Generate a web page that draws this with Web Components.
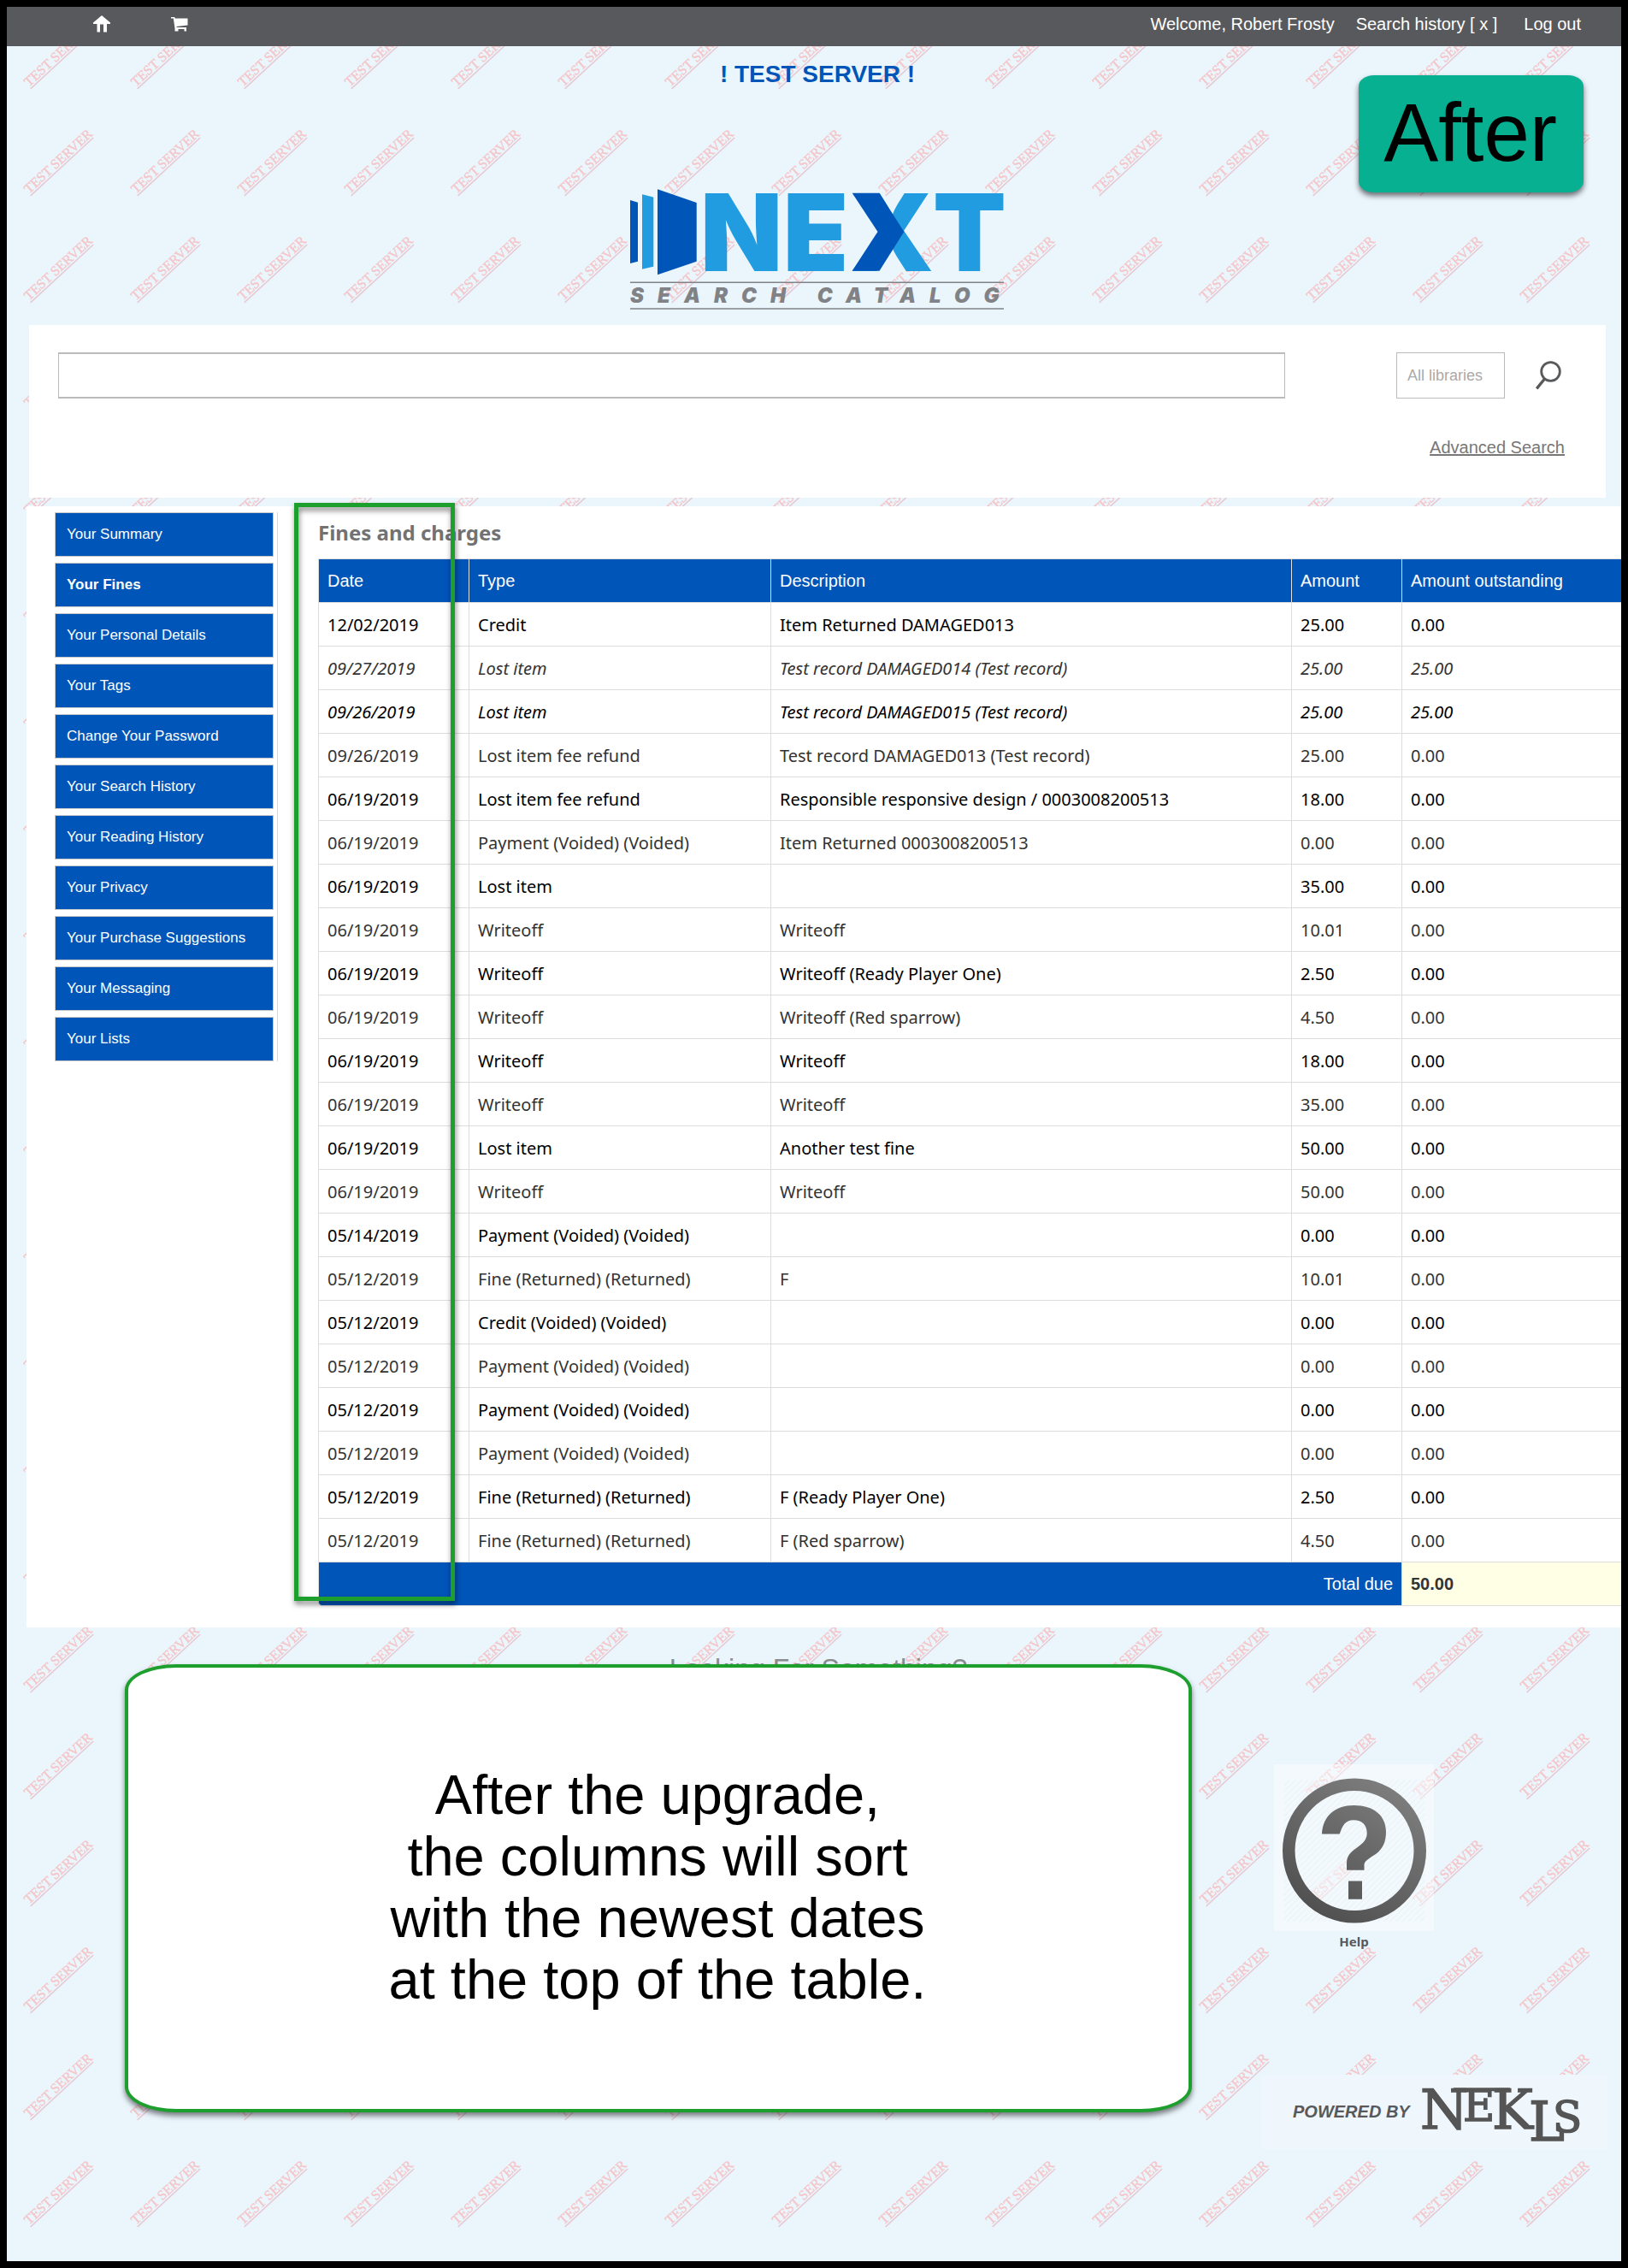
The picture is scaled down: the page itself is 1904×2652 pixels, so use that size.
<!DOCTYPE html>
<html lang="en">
<head>
<meta charset="utf-8">
<title>Next Search Catalog: Your fines</title>
<style>
  html { background: #000; }
  body { margin: 0; padding: 8px; background: #000; font: 20px/24px "Liberation Sans", Arial, sans-serif; }
</style>
</head>
<body>
<catalog-page>
  <top-bar slot="bar"></top-bar>
  <site-hero slot="hero"></site-hero>
  <search-panel slot="search"></search-panel>
  <account-nav slot="nav"></account-nav>
  <fines-table slot="content"></fines-table>
  <site-footer slot="footer"></site-footer>
  <after-badge slot="overlay">After</after-badge>
  <callout-note slot="overlay">After the upgrade,<br>the columns will sort<br>with the newest dates<br>at the top of the table.</callout-note>
</catalog-page>

<script>
  const define = (name, html, setup) => {
    const template = document.createElement('template');
    template.innerHTML = html;
    customElements.define(name, class extends HTMLElement {
      constructor() {
        super();
        this.attachShadow({ mode: 'open' }).append(template.content.cloneNode(true));
        if (setup) setup(this.shadowRoot);
      }
    });
  };

  define('test-watermark', `
    <style>
      :host { display: block; }
      svg { display: block; width: 100%; height: 100%; }
      text { font: 16px "Liberation Serif", serif; fill: #f4c6c9; stroke: #f4c6c9; stroke-width: .4; }
    </style>
    <svg aria-hidden="true">
      <defs>
        <pattern id="tile" width="125" height="125" patternUnits="userSpaceOnUse">
          <g transform="translate(26 94) rotate(-42.7)">
            <text>TEST SERVER</text>
            <path d="M0 2.5H100" stroke="#e6c9d3" stroke-width="1.5"/>
          </g>
        </pattern>
      </defs>
      <rect width="100%" height="100%" fill="url(#tile)"/>
    </svg>`);

  define('catalog-page', `
    <style>
      :host { display: block; position: relative; overflow: hidden; background: #eaf5fc; }
      test-watermark { position: absolute; inset: 0; }
      .page { position: relative; }
      .search { display: block; margin: 0 18px 10px 26px; }
      main { position: relative; display: flex; align-items: flex-start; gap: 47px; margin-left: 23px; padding: 7px 0 25px 33px; background: #fff; }
      ::slotted(account-nav) { flex: none; }
      ::slotted(fines-table) { flex: 1; min-width: 0; }
      .highlight { position: absolute; left: 313px; top: -4px; bottom: 31px; width: 178px; border: 5px solid #1d9f2d; filter: drop-shadow(1px 4px 3px rgba(0,0,0,.5)); pointer-events: none; }
    </style>
    <test-watermark></test-watermark>
    <div class="page">
      <slot name="bar"></slot>
      <slot name="hero"></slot>
      <div class="search"><slot name="search"></slot></div>
      <main>
        <slot name="nav"></slot>
        <slot name="content"></slot>
        <div class="highlight"></div>
      </main>
      <slot name="footer"></slot>
    </div>
    <slot name="overlay"></slot>`);

  define('top-bar', `
    <style>
      :host { display: block; background: #58595c; }
      nav { display: flex; align-items: center; height: 40px; padding: 0 47px 6px 101px; gap: 25px; }
      a { color: #fff; text-decoration: none; }
      .icon { display: flex; margin-right: 46px; }
      .space { flex: 1; }
      .last { margin-left: 6px; }
    </style>
    <nav aria-label="Account">
      <a class="icon" href="#home" aria-label="Home"><svg width="20" height="20" viewBox="0 0 20 20" fill="#fff"><path d="M10 0 20 8.6V10H16V19.5H12V10.5H8V19.5H4.500V10H0V8.600Z"/></svg></a>
      <a class="icon" href="#cart" aria-label="Cart"><svg width="20" height="20" viewBox="0 0 20 20" fill="#fff"><path d="M0 2H4.200L4.700 3.500H19.500V11.500L6.500 13L6.700 14H18V18.500H15.500V16H8.500V18.500H4.500V15L2.800 3.500H0Z"/></svg></a>
      <span class="space"></span>
      <a href="#me">Welcome, Robert Frosty</a>
      <a href="#history">Search history [ x ]</a>
      <a class="last" href="#logout">Log out</a>
    </nav>`);

  define('next-logo', `
    <style>
      :host { display: block; }
      svg { display: block; overflow: visible; }
      .word { font: 900 125px Inter, sans-serif; fill: #229ce0; text-anchor: middle; }
      .sub { font: italic 900 24px Inter, sans-serif; fill: #808285; letter-spacing: 16px; }
    </style>
    <svg width="438" height="142" viewBox="0 0 438 142" role="img" aria-label="Next Search Catalog">
      <path d="M0 14 9 16.700V85.700L0 88ZM32 1.300 77.700 17V85.700L32 101.300Z" fill="#0055b8"/>
      <path d="M14 7.300 27.300 10.700V91.700L14 94.700Z" fill="#229ce0"/>
      <text class="word" y="96.700"><tspan x="130">N</tspan><tspan x="217">E</tspan><tspan x="306">X</tspan><tspan x="397">T</tspan></text>
      <path d="M259.700 5.700H291.500L320.300 51 291.500 96.700H259.700L289.500 51Z" fill="#0055b8"/>
      <path d="M0 110.300H437M0 141H437" stroke="#808285" stroke-width="1.500"/>
      <text class="sub" x="0" y="134.300">SEARCH CATALOG</text>
    </svg>`);

  define('site-hero', `
    <style>
      :host { display: flex; flex-direction: column; align-items: center; margin: 0 18px 0 26px; padding: 17px 0 18px; }
      strong { margin-bottom: 117px; font-size: 28px; line-height: 32px; color: #0055b8; }
    </style>
    <strong>! TEST SERVER !</strong>
    <next-logo></next-logo>`);

  define('search-panel', `
    <style>
      :host { display: block; background: #fff; }
      form { padding: 32px 48px 47px 34px; }
      .row { display: flex; align-items: center; margin-bottom: 45px; }
      input, select { box-sizing: border-box; height: 54px; margin: 0; border: 1px solid #bbb; border-radius: 0; background: #fff; font: 18px "Liberation Sans", Arial, sans-serif; outline: none; }
      input { flex: 1; min-width: 0; border-width: 2px 1px; padding: 0 12px; margin-right: 130px; }
      select { appearance: none; width: 127px; padding: 0 12px; color: #aaa; }
      button { display: flex; margin: 0 4px 0 36px; padding: 0; border: 0; background: none; }
      .more { text-align: right; }
      a { color: #777; }
    </style>
    <form onsubmit="return false">
      <div class="row">
        <input type="text" aria-label="Search the catalog">
        <select aria-label="Library"><option>All libraries</option></select>
        <button aria-label="Search"><svg width="30" height="34" viewBox="0 0 30 34" fill="none" stroke="#58595b"><circle cx="17.500" cy="12.500" r="10.800" stroke-width="2.800"/><path d="M10.500 21 1.200 32.500" stroke-width="3.400"/></svg></button>
      </div>
      <div class="more"><a href="#advanced">Advanced Search</a></div>
    </form>`);

  define('account-nav', `
    <style>
      :host { display: block; border-right: 1px solid #d8d8d8; padding-right: 4px; }
      nav { display: flex; flex-direction: column; gap: 7px; width: 256px; }
      a { display: block; padding: 13px; border: 1px solid #c8c8c8; background: #0055b8; color: #fff; font-size: 17px; line-height: 24px; text-decoration: none; }
      a.current { font-weight: bold; }
    </style>
    <nav aria-label="Your account"></nav>`, root => {
      root.querySelector('nav').innerHTML = ['Your Summary', 'Your Fines', 'Your Personal Details', 'Your Tags',
        'Change Your Password', 'Your Search History', 'Your Reading History', 'Your Privacy',
        'Your Purchase Suggestions', 'Your Messaging', 'Your Lists']
        .map(t => `<a href="#"${t === 'Your Fines' ? ' class="current" aria-current="page"' : ''}>${t}</a>`).join('');
    });

  const fines = [
    ['12/02/2019', 'Credit', 'Item Returned DAMAGED013', '25.00', '0.00'],
    ['09/27/2019', 'Lost item', 'Test record DAMAGED014 (Test record)', '25.00', '25.00'],
    ['09/26/2019', 'Lost item', 'Test record DAMAGED015 (Test record)', '25.00', '25.00'],
    ['09/26/2019', 'Lost item fee refund', 'Test record DAMAGED013 (Test record)', '25.00', '0.00'],
    ['06/19/2019', 'Lost item fee refund', 'Responsible responsive design / 0003008200513', '18.00', '0.00'],
    ['06/19/2019', 'Payment (Voided) (Voided)', 'Item Returned 0003008200513', '0.00', '0.00'],
    ['06/19/2019', 'Lost item', '', '35.00', '0.00'],
    ['06/19/2019', 'Writeoff', 'Writeoff', '10.01', '0.00'],
    ['06/19/2019', 'Writeoff', 'Writeoff (Ready Player One)', '2.50', '0.00'],
    ['06/19/2019', 'Writeoff', 'Writeoff (Red sparrow)', '4.50', '0.00'],
    ['06/19/2019', 'Writeoff', 'Writeoff', '18.00', '0.00'],
    ['06/19/2019', 'Writeoff', 'Writeoff', '35.00', '0.00'],
    ['06/19/2019', 'Lost item', 'Another test fine', '50.00', '0.00'],
    ['06/19/2019', 'Writeoff', 'Writeoff', '50.00', '0.00'],
    ['05/14/2019', 'Payment (Voided) (Voided)', '', '0.00', '0.00'],
    ['05/12/2019', 'Fine (Returned) (Returned)', 'F', '10.01', '0.00'],
    ['05/12/2019', 'Credit (Voided) (Voided)', '', '0.00', '0.00'],
    ['05/12/2019', 'Payment (Voided) (Voided)', '', '0.00', '0.00'],
    ['05/12/2019', 'Payment (Voided) (Voided)', '', '0.00', '0.00'],
    ['05/12/2019', 'Payment (Voided) (Voided)', '', '0.00', '0.00'],
    ['05/12/2019', 'Fine (Returned) (Returned)', 'F (Ready Player One)', '2.50', '0.00'],
    ['05/12/2019', 'Fine (Returned) (Returned)', 'F (Red sparrow)', '4.50', '0.00']
  ];

  define('fines-table', `
    <style>
      :host { display: block; padding-top: 8px; }
      h1 { margin: 0 0 14px; font: bold 24px/32px "Noto Sans", sans-serif; color: #727272; }
      table { width: 100%; table-layout: fixed; border-collapse: separate; border-spacing: 0; border-top: 1px solid #ddd; }
      .date { width: 176px; } .type { width: 353px; } .amount { width: 129px; } .due { width: 257px; }
      th, td { box-sizing: border-box; height: 51px; padding: 10px; border-left: 1px solid #ddd; border-bottom: 1px solid #ddd; line-height: 30px; text-align: left; }
      th { background: #0055b8; color: #fff; font-weight: normal; }
      tbody { font-family: "Noto Sans", sans-serif; color: #333; }
      tbody td { padding: 11px 10px 9px; }
      tbody tr:nth-child(odd) { color: #000; }
      .open { font-style: italic; }
      tfoot th { text-align: right; border-bottom-left-radius: 5px; }
      .sum { background: #ffffe5; color: #333; font-weight: bold; }
    </style>
    <h1>Fines and charges</h1>
    <table>
      <colgroup><col class="date"><col class="type"><col><col class="amount"><col class="due"></colgroup>
      <thead><tr><th>Date</th><th>Type</th><th>Description</th><th>Amount</th><th>Amount outstanding</th></tr></thead>
      <tbody></tbody>
      <tfoot><tr><th colspan="4">Total due</th><td class="sum">50.00</td></tr></tfoot>
    </table>`, root => {
      root.querySelector('tbody').innerHTML = fines.map(row =>
        `<tr${row[4] !== '0.00' ? ' class="open"' : ''}>${row.map(c => `<td>${c}</td>`).join('')}</tr>`).join('');
    });

  define('help-link', `
    <style>
      :host { display: block; }
      a { display: flex; flex-direction: column; align-items: center; color: #58595b; font: bold 15px/24px "Noto Sans", sans-serif; text-decoration: none; }
      svg { display: block; }
    </style>
    <a href="#help">
      <svg width="187" height="195" viewBox="0 0 187 195" aria-hidden="true">
        <defs>
          <linearGradient id="ink" x1="0.200" y1="1" x2="0.800" y2="0"><stop offset="0" stop-color="#4d4d4d"/><stop offset="1" stop-color="#808080"/></linearGradient>
          <pattern id="hatch" width="5" height="5" patternUnits="userSpaceOnUse" patternTransform="rotate(45)"><path d="M1 0V5" stroke="#e4eff4" stroke-width="1"/></pattern>
        </defs>
        <rect width="187" height="195" fill="#fff" fill-opacity=".45"/>
        <rect x="11" y="18" width="166" height="166" fill="url(#hatch)" opacity=".7"/>
        <path fill="url(#ink)" fill-rule="evenodd" d="M10 101a84 84.500 0 1 0 168 0a84 84.500 0 1 0 -168 0ZM24.500 101a69.500 70 0 1 0 139 0a69.500 70 0 1 0 -139 0ZM56 81.600C57 60 72 48 93 48C117 48 131 60 131 79C131 91 127 99 119 105C110 111 105.500 113 105.500 118V123.700H85V116C85 107 89 103 97 97.500C104.500 92 108.700 88 108.700 80.500C108.700 71 103 65.200 93 65.200C83 65.200 80 72 76.700 81.600ZM87 136.600H103V157.800H87Z"/>
      </svg>
      Help
    </a>`);

  define('nekls-logo', `
    <style>
      :host { display: block; background: #eff7fd; }
      svg { display: block; overflow: visible; }
      .by { font: italic bold 20px "Liberation Sans", Arial, sans-serif; fill: #58595b; }
      .name { font-family: "DejaVu Serif", serif; fill: #555; stroke: #555; stroke-width: 1.600; }
    </style>
    <svg width="405" height="87" viewBox="0 0 405 87" role="img" aria-label="Powered by NEKLS">
      <text class="by" x="37" y="50">POWERED BY</text>
      <text class="name"><tspan x="186" y="62.500" font-size="64">N</tspan><tspan x="236" y="53.500" font-size="51">E</tspan><tspan x="270" y="62.500" font-size="64">K</tspan><tspan x="313" y="76.500" font-size="63">L</tspan><tspan x="341" y="66.500" font-size="50">S</tspan></text>
      <path d="M225 17.200H291" stroke="#555" stroke-width="4"/>
    </svg>`);

  define('site-footer', `
    <style>
      :host { display: flex; flex-direction: column; align-items: flex-end; padding: 28px 16px 131px 26px; }
      h2 { align-self: center; margin: 0 0 92px; font-size: 32px; font-weight: normal; line-height: 40px; color: #8a8c8f; }
      help-link { margin: 0 203px 144px 0; }
    </style>
    <h2>Looking For Something?</h2>
    <help-link></help-link>
    <nekls-logo></nekls-logo>`);

  define('after-badge', `
    <style>
      :host { position: absolute; top: 80px; right: 44px; width: 263px; padding: 12px 2px 15px 0; box-sizing: border-box; text-align: center; border-radius: 18px / 13px; background: #08b092; color: #000; font-size: 96px; line-height: 110px; box-shadow: 0 4px 6px rgba(0,0,0,.55); }
    </style>
    <slot></slot>`);

  define('callout-note', `
    <style>
      :host { position: absolute; left: 138px; bottom: 174px; width: 1248px; padding: 113px 2px 115px 0; box-sizing: border-box; text-align: center; border: 4px solid #1d9f2d; border-radius: 60px / 30px; background: #fff; color: #000; font-size: 65px; line-height: 72px; box-shadow: 0 4px 6px rgba(0,0,0,.5); }
    </style>
    <slot></slot>`);
</script>
</body>
</html>
